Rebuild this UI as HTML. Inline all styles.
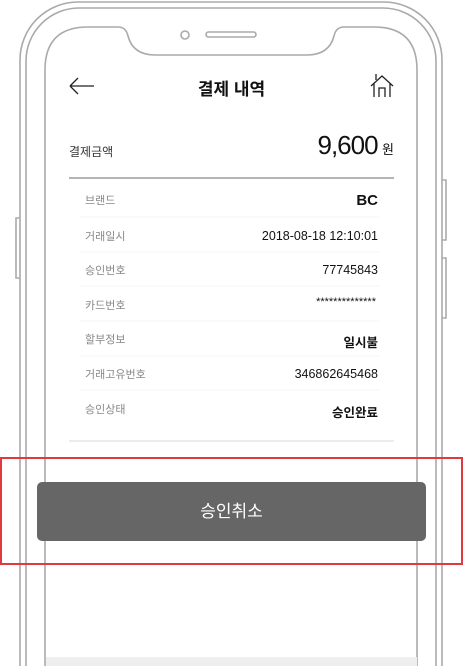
<!DOCTYPE html>
<html><head><meta charset="utf-8"><style>
html,body{margin:0;padding:0;width:463px;height:666px;overflow:hidden;background:#fff;font-family:"Liberation Sans","Noto Sans CJK KR",sans-serif;}
.a{position:absolute;}
.lbl{position:absolute;left:85px;font-size:11px;color:#888;}
.val{position:absolute;right:85px;font-size:12.5px;color:#111;text-align:right;}
</style></head><body>
<svg class="a" style="left:0;top:0" width="463" height="666" viewBox="0 0 463 666">
<g fill="none" stroke="#aaa" stroke-width="1.6">
<rect x="20" y="2" width="422" height="720" rx="58"/>
<rect x="26" y="8" width="410" height="720" rx="53"/>
<path d="M45 720 V70 Q45 27 88 27 H118 Q126 27 128 36 Q133 55 155 55 H307 Q329 55 334 36 Q336 27 344 27 H374 Q417 27 417 70 V720"/>
<path d="M20 218 H16 V278 H20"/>
<path d="M442 180 H446 V240 H442"/>
<path d="M442 258 H446 V318 H442"/>
<circle cx="185" cy="35" r="4"/>
<rect x="206" y="32" width="50" height="5" rx="2.5"/>
</g>
<rect x="46" y="657" width="371" height="12" fill="#eee"/>
<g fill="none" stroke="#222" stroke-width="1.3">
<path d="M70 86 H94 M70 86 L78 78 M70 86 L78 94"/>
<path d="M371 86 L382 76 L393 86 M374 83 V97 M390 83 V97 M379 97 V88 H385 V97 M376 80 V74"/>
</g>
<line x1="69" y1="178" x2="394" y2="178" stroke="#888" stroke-width="1.2"/>
<g stroke="#f6f6f6" stroke-width="1">
<line x1="80" y1="217" x2="380" y2="217"/><line x1="80" y1="252" x2="380" y2="252"/>
<line x1="80" y1="286" x2="380" y2="286"/><line x1="80" y1="321" x2="380" y2="321"/>
<line x1="80" y1="356" x2="380" y2="356"/><line x1="80" y1="390" x2="380" y2="390"/>
</g>
<line x1="69" y1="441" x2="394" y2="441" stroke="#e6e6e6" stroke-width="1.5"/>
</svg>
<div class="a" style="left:0;width:463px;top:75px;text-align:center;font-size:17px;font-weight:bold;color:#111;">결제 내역</div>
<div class="a" style="left:69px;top:143px;font-size:12px;color:#333;">결제금액</div>
<div class="a" style="right:69px;top:130px;color:#111;"><span style="font-size:26px;letter-spacing:-1px;">9,600</span> <span style="font-size:13px;">원</span></div>
<div class="lbl" style="top:192px">브랜드</div><div class="val" style="top:192px;font-size:15px;font-weight:bold">BC</div>
<div class="lbl" style="top:228px">거래일시</div><div class="val" style="top:229px">2018-08-18 12:10:01</div>
<div class="lbl" style="top:262px">승인번호</div><div class="val" style="top:263px">77745843</div>
<div class="lbl" style="top:297px">카드번호</div><div class="val" style="top:296px;font-size:11px;right:87px">**************</div>
<div class="lbl" style="top:331px">할부정보</div><div class="val" style="top:332px;font-weight:bold">일시불</div>
<div class="lbl" style="top:366px">거래고유번호</div><div class="val" style="top:367px">346862645468</div>
<div class="lbl" style="top:401px">승인상태</div><div class="val" style="top:402px;font-weight:bold">승인완료</div>
<div class="a" style="left:0;top:457px;width:459px;height:104px;border:2px solid #e03a3e;"></div>
<div class="a" style="left:37px;top:482px;width:389px;height:59px;background:#666;border-radius:5px;color:#fff;font-size:17px;line-height:59px;text-align:center;">승인취소</div>
</body></html>
